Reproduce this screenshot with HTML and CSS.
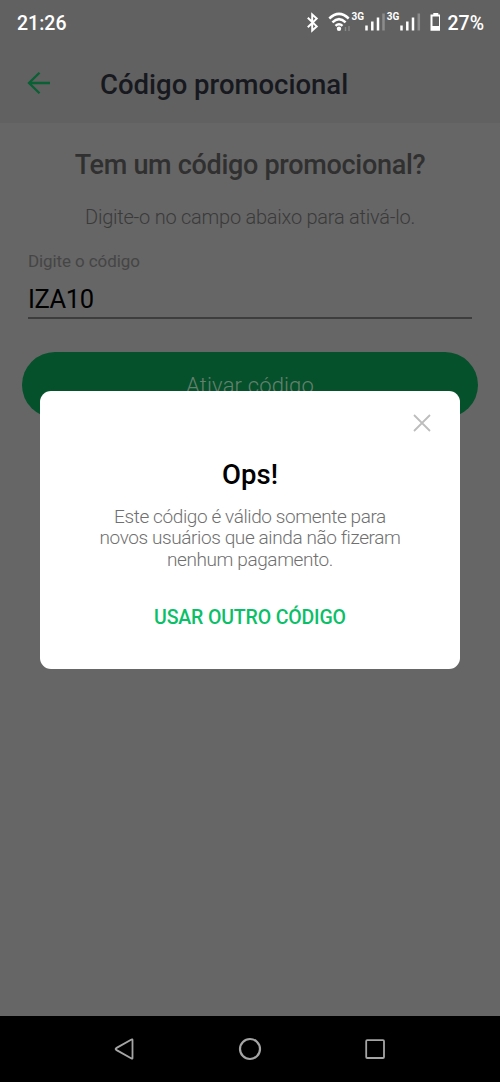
FILE: index.html
```html
<!DOCTYPE html>
<html lang="pt-BR">
<head>
<meta charset="utf-8">
<title>Código promocional</title>
<link rel="stylesheet" href="styles.css">
</head>
<body>
<div class="screen">
  <header class="top">
    <div class="status">
      <span class="clock">21:26</span>
      <svg class="status-icons" width="140" height="26" viewBox="300 10 140 26" fill="none">
        <path d="M307.800 17.800l8.900 8.600-4.500 4v-15.800l4.500 4-8.900 8.600" stroke="#fff" stroke-width="2"/>
        <g stroke="#fff" stroke-width="2.500">
          <path d="M329.300 18.500Q339 9.200 348.700 18.500"/>
          <path d="M332.400 22.300Q339 16 345.600 22.300"/>
          <path d="M335.500 25.900Q339 22.600 342.500 25.900"/>
        </g>
        <circle cx="339" cy="28.800" r="2.200" fill="#fff"/>
        <path d="M345.500 31v-4M349 31v-5" stroke="#888" stroke-width="1.400"/>
        <path d="M366.500 30.500v-5M372.300 30.500v-9M378 30.500v-13M401.500 30.500v-5M407.300 30.500v-9M413 30.500v-13" stroke="#fff" stroke-width="2.500"/>
        <path d="M383.500 30.500v-17M418.800 30.500v-17" stroke="#8c8c8c" stroke-width="2.500"/>
        <path d="M431.500 15.500h8.500v14.300h-8.500z" stroke="#fff" stroke-width="2"/>
        <path d="M433.300 13h5v2h-5zM431.500 26h8.500v4h-8.500z" fill="#fff"/>
        <text x="351.500" y="19.500" class="net">3G</text>
        <text x="386.700" y="19.500" class="net">3G</text>
      </svg>
      <span class="battery">27%</span>
    </div>
    <div class="appbar">
      <svg class="back" width="24" height="24" viewBox="0 0 24 24" fill="none" stroke="#086034" stroke-width="2.300"><path d="M23 12H2M12.500 1.800L2 12l10.500 10.200"/></svg>
      <h1 class="title">Código promocional</h1>
    </div>
  </header>
  <main class="content">
    <h2 class="heading">Tem um código promocional?</h2>
    <p class="hint">Digite-o no campo abaixo para ativá-lo.</p>
    <div class="field">
      <span class="label">Digite o código</span>
      <span class="value">IZA10</span>
    </div>
    <div class="activate">Ativar código</div>
  </main>
  <nav class="navbar">
    <svg width="24" height="24" viewBox="0 0 24 24"><path d="M19.500 3v18q0 1-1 .5L3.200 12.900q-1.200-.9 0-1.800L18.500 2.500q1-.5 1 .5z"/></svg>
    <svg width="24" height="24" viewBox="0 0 24 24"><circle cx="12" cy="12" r="10" stroke-width="2.200"/></svg>
    <svg width="24" height="24" viewBox="0 0 24 24"><rect x="3.200" y="3.200" width="17.800" height="17.800" rx="1"/></svg>
  </nav>
  <section class="dialog">
    <svg class="close" width="18" height="18" viewBox="0 0 18 18" fill="none" stroke="#bdbdbd" stroke-width="1.800"><path d="M1 1l16 16M17 1L1 17"/></svg>
    <h3 class="ops">Ops!</h3>
    <p class="message">Este código é válido somente para<br>novos usuários que ainda não fizeram<br>nenhum pagamento.</p>
    <div class="action">USAR OUTRO CÓDIGO</div>
  </section>
</div>
</body>
</html>
```
FILE: styles.css
```css
* { box-sizing: border-box; }
body { margin: 0; font-family: Roboto, sans-serif; }
h1, h2, h3, p { margin: 0; font-weight: 500; white-space: nowrap; }
.screen {
  position: relative;
  display: flex;
  flex-direction: column;
  width: 500px;
  height: 1082px;
  background: #666;
  overflow: hidden;
}
.top { height: 123px; background: #616161; }
.status {
  display: flex;
  align-items: center;
  height: 46px;
  padding: 0 16px 0 17px;
  color: #fff;
  font-size: 19.5px;
  font-weight: 500;
}
.status-icons { margin-left: auto; margin-right: 7px; }
.net { font: 700 10px Roboto, sans-serif; fill: #fff; }
.appbar { display: flex; align-items: center; height: 77px; padding-left: 27px; }
.back { margin-bottom: 3px; }
.title { margin-left: 49px; font-size: 27.5px; line-height: 32px; color: #17191f; }
.content {
  flex: 1;
  display: flex;
  flex-direction: column;
  align-items: center;
  padding: 26px 22px 0;
}
.heading { font-size: 27px; letter-spacing: -0.3px; line-height: 32px; color: #303030; }
.hint { margin-top: 24px; font-size: 20px; letter-spacing: -0.24px; line-height: 24px; font-weight: 300; color: #3a3a3a; }
.field {
  display: flex;
  flex-direction: column;
  width: 444px;
  height: 69px;
  margin-top: 21px;
  border-bottom: 2px solid #3d3d3d;
}
.label { font-size: 17px; letter-spacing: -0.1px; line-height: 22px; color: #454545; }
.value { margin-top: 12px; font-size: 25.5px; letter-spacing: -0.4px; line-height: 30px; color: #000; }
.activate {
  width: 456px;
  height: 66px;
  margin-top: 33px;
  border-radius: 33px;
  background: #05512b;
  color: #66806f;
  font-size: 22px;
  letter-spacing: 0.15px;
  font-weight: 300;
  line-height: 67px;
  text-align: center;
}
.navbar {
  display: flex;
  justify-content: center;
  gap: 101px;
  height: 66px;
  padding-top: 21px;
  background: #000;
}
.navbar svg { fill: none; stroke: #a5a5a5; stroke-width: 1.8; }
.dialog {
  position: absolute;
  left: 40px;
  top: 391px;
  width: 420px;
  height: 278px;
  padding-top: 23px;
  border-radius: 11px;
  background: #fff;
  text-align: center;
}
.close { display: block; margin-left: 373px; }
.ops { margin-top: 27px; font-size: 27.5px; line-height: 32px; color: #000; }
.message { margin-top: 15px; font-size: 19px; letter-spacing: -0.4px; line-height: 21.3px; font-weight: 300; color: #707070; }
.action { margin-top: 36.5px; font-size: 19.5px; letter-spacing: -0.15px; line-height: 24px; font-weight: 500; color: #0abf68; }
```
